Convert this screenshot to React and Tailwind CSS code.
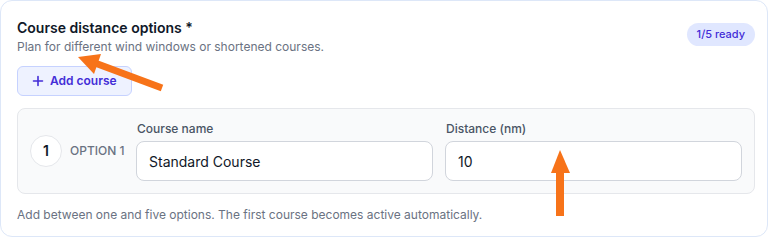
import React from "react"

function Field({ label, value }) {
  return (
    <div className="flex-1 flex flex-col gap-[3px]">
      <label className="text-[12px] font-medium text-gray-600 pl-px">{label}</label>
      <input
        readOnly
        value={value}
        className="h-10 w-full rounded-lg border border-gray-300 bg-white px-3 text-[14px] text-gray-900 outline-none"
      />
    </div>
  )
}

export default function App() {
  return (
    <div className="relative w-[772px] h-[239px] bg-white font-['Inter',sans-serif]">
      <div className="w-[768px] h-[237px] rounded-xl border border-[#dde7f8] bg-white px-4 pt-[17px]">
        {/* Header */}
        <div className="flex items-start justify-between">
          <div>
            <h3 className="text-[14px] font-semibold text-gray-900 leading-5">
              Course distance options *
            </h3>
            <p className="text-[12px] text-gray-500">
              Plan for different wind windows or shortened courses.
            </p>
          </div>
          <span className="mt-[5px] -mr-1 rounded-full bg-indigo-100 px-2.5 py-[3px] text-[11px] font-medium text-indigo-700">
            1/5 ready
          </span>
        </div>

        <button className="mt-[10px] flex h-[30px] items-center gap-1.5 rounded-md border border-indigo-200 bg-indigo-50 px-[14px] text-[12px] font-semibold text-indigo-700">
          <svg width="12" height="12" viewBox="0 0 12 12" fill="none" stroke="currentColor" strokeWidth="1.6" strokeLinecap="round">
            <path d="M6 1.5v9M1.5 6h9" />
          </svg>
          Add course
        </button>

        {/* Option row */}
        <div className="mt-3 flex w-[738px] items-center gap-2 rounded-lg border border-gray-200 bg-gray-50 px-3 pt-[11px] pb-[12px]">
          <div className="flex h-8 w-8 shrink-0 items-center justify-center rounded-full border border-gray-200 bg-white text-[14px] font-semibold text-gray-900">
            1
          </div>
          <span className="w-[58px] text-[12px] font-medium uppercase text-gray-500">Option 1</span>
          <div className="flex flex-1 gap-3">
            <Field label="Course name" value="Standard Course" />
            <Field label="Distance (nm)" value="10" />
          </div>
        </div>

        <p className="mt-[12px] text-[12px] text-gray-500">
          Add between one and five options. The first course becomes active automatically.
        </p>
      </div>

      {/* annotation arrows */}
      <svg className="absolute left-0 top-0 pointer-events-none" width="772" height="239">
        <line x1="162" y1="88" x2="95" y2="63" stroke="#f77319" strokeWidth="7" />
        <polygon points="78,57 101,54 94,74" fill="#f77319" />
        <rect x="556" y="168" width="8" height="48" fill="#f77319" />
        <polygon points="560,150 551,173 570,173" fill="#f77319" />
      </svg>
    </div>
  )
}
